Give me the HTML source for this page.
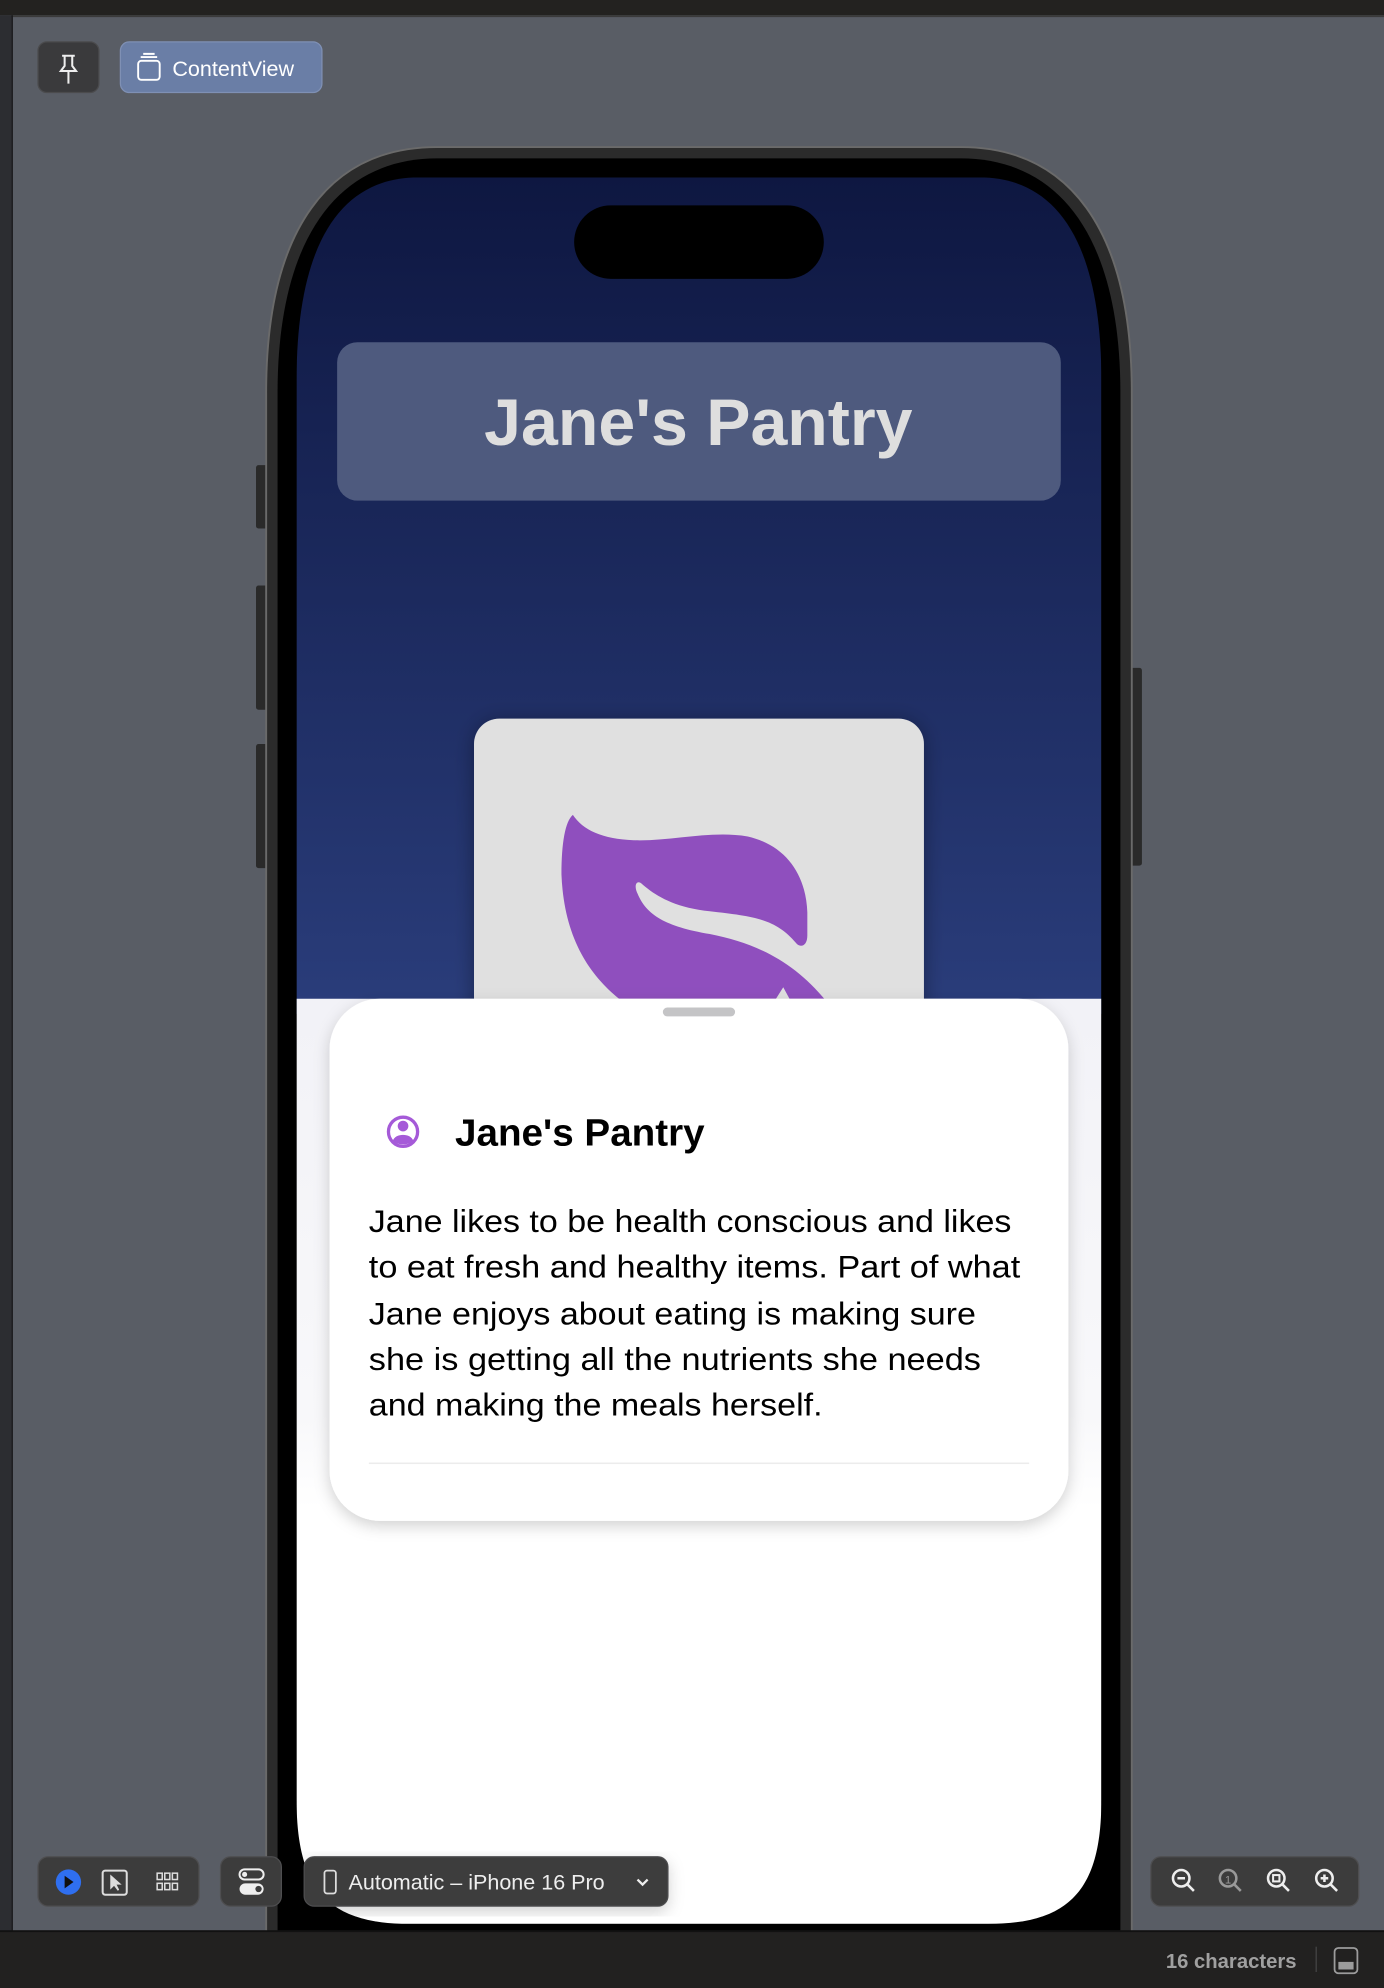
<!DOCTYPE html>
<html><head><meta charset="utf-8"><style>
html,body{margin:0;padding:0;background:#595d65;width:1384px;height:1988px;overflow:hidden}
svg{display:block}
text{font-family:"Liberation Sans",sans-serif}
</style></head><body>
<svg width="1384" height="1988" viewBox="0 0 1092 1568.6" preserveAspectRatio="none" xmlns="http://www.w3.org/2000/svg">
<defs>
<linearGradient id="bg" x1="0" y1="0" x2="0" y2="1">
<stop offset="0" stop-color="#0e1741"/><stop offset="1" stop-color="#2a3d7b"/></linearGradient>
<linearGradient id="sheet" x1="0" y1="0" x2="0" y2="1">
<stop offset="0" stop-color="#f2f2f7"/><stop offset="0.45" stop-color="#f8f8fa"/><stop offset="0.55" stop-color="#ffffff"/></linearGradient>
<filter id="sh" x="-10%" y="-10%" width="120%" height="130%"><feDropShadow dx="0" dy="4" stdDeviation="6" flood-color="#000" flood-opacity="0.18"/></filter>
<filter id="sh2" x="-10%" y="-10%" width="120%" height="130%"><feDropShadow dx="0" dy="2" stdDeviation="8" flood-color="#000" flood-opacity="0.35"/></filter>
<clipPath id="scr"><path d="M234,300 C234,190 270,140 330,140 L773,140 C833,140 869,190 869,300 L869,1420 C869,1490 845,1518 780,1518 L323,1518 C258,1518 234,1490 234,1420 Z"/></clipPath>
</defs>
<rect x="0" y="0" width="1092" height="12" fill="#232220"/>
<rect x="0" y="12" width="1092" height="1.5" fill="#3a3a3a"/>
<rect x="0" y="12" width="9" height="1512" fill="#2c2d31"/>
<rect x="9" y="12" width="1.2" height="1512" fill="#1a1a1c"/>
<rect x="30" y="33" width="48" height="40" rx="7" fill="#3a3a3c" stroke="#4b4b4d"/>
<g stroke="#eee" stroke-width="1.6" fill="none"><path d="M49,44 h10 M51,44 v8 l-3,4 h12 l-3,-4 v-8 M54,56 v10"/></g>
<rect x="95" y="33" width="159" height="40" rx="7" fill="#6a7ea6" stroke="#7f90b4"/>
<g stroke="#fff" stroke-width="1.5" fill="none"><rect x="109" y="48" width="17" height="15" rx="2.5"/><path d="M111,45 h13 M113,42.5 h9"/></g>
<text x="136" y="60" font-size="17" fill="#fff">ContentView</text>
<rect x="202" y="367" width="10" height="50" rx="2" fill="#2a2a2a"/>
<rect x="202" y="462" width="10" height="98" rx="2" fill="#2a2a2a"/>
<rect x="202" y="587" width="10" height="98" rx="2" fill="#2a2a2a"/>
<rect x="891" y="527" width="10" height="156" rx="2" fill="#2a2a2a"/>
<path d="M210,310 C210,180 260,116 345,116 L758,116 C843,116 893,180 893,310 L893,1600 L210,1600 Z" fill="#2b2b2b" stroke="#6a6a6a" stroke-width="1.5"/>
<path d="M219,310 C219,190 265,125 345,125 L758,125 C838,125 884,190 884,310 L884,1600 L219,1600 Z" fill="#000"/>
<g clip-path="url(#scr)">
<rect x="234" y="140" width="635" height="660" fill="url(#bg)"/>
<rect x="266" y="270" width="571" height="125" rx="16" fill="#4e5a7e"/>
<text x="551" y="351" font-size="52" font-weight="bold" fill="#dedede" text-anchor="middle" textLength="338" lengthAdjust="spacingAndGlyphs">Jane's Pantry</text>
<rect x="374" y="567" width="355" height="260" rx="20" fill="#e0e0e0" filter="url(#sh2)"/>
<path d="M452,643 C460,655 475,662 500,663 C530,664 560,655 590,660 C620,667 636,690 637,720 L637,738 C637,747 631,748 628,744 C612,725 595,723 560,719 C530,716 515,705 506,697 C502,694 500,699 503,705 C510,722 525,731 560,737 C595,744 625,757 652,790 L491,790 C465,770 445,740 443,690 C443,665 446,648 452,643 Z" fill="#8f4fbe"/>
<path d="M611,790 L618,779 L624,790 Z" fill="#e0e0e0"/>
<path d="M234,788 L869,788 L869,1520 L234,1520 Z" fill="url(#sheet)"/>
<rect x="260" y="788" width="583" height="412" rx="40" fill="#fff" filter="url(#sh)"/>
<rect x="523" y="795" width="57" height="7" rx="3.5" fill="#c4c4c6"/>
<circle cx="318" cy="893" r="11.5" fill="none" stroke="#a55ad8" stroke-width="2.6"/>
<circle cx="318" cy="888.5" r="4.2" fill="#a55ad8"/>
<path d="M310,900 C312,894 324,894 326,900 C322,904 314,904 310,900 Z" fill="#a55ad8"/>
<text x="359" y="904" font-size="30" font-weight="bold" fill="#000" textLength="197" lengthAdjust="spacingAndGlyphs">Jane's Pantry</text>
<g font-size="25" fill="#000">
<text x="291" y="972" textLength="507" lengthAdjust="spacingAndGlyphs">Jane likes to be health conscious and likes</text>
<text x="291" y="1008" textLength="514" lengthAdjust="spacingAndGlyphs">to eat fresh and healthy items. Part of what</text>
<text x="291" y="1045" textLength="479" lengthAdjust="spacingAndGlyphs">Jane enjoys about eating is making sure</text>
<text x="291" y="1081" textLength="483" lengthAdjust="spacingAndGlyphs">she is getting all the nutrients she needs</text>
<text x="291" y="1117" textLength="358" lengthAdjust="spacingAndGlyphs">and making the meals herself.</text>
</g>
<rect x="291" y="1154" width="521" height="1.2" fill="#ececec"/>
</g>
<rect x="453" y="162" width="197" height="58" rx="29" fill="#000"/>
<rect x="30" y="1465" width="127" height="39" rx="8" fill="#3c3c3c" stroke="#4e4e50"/>
<circle cx="54" cy="1485" r="10" fill="#2f6ff0"/><path d="M51,1480 L58,1485 L51,1490 Z" fill="#111"/>
<rect x="81" y="1476" width="19" height="19" rx="2" fill="none" stroke="#ddd" stroke-width="1.6"/><path d="M87,1479 L87,1491 L90,1488 L93,1492 L94,1491 L92,1487 L96,1487 Z" fill="#ddd"/>
<g fill="none" stroke="#ddd" stroke-width="1.2"><rect x="124" y="1478" width="4" height="5"/><rect x="130" y="1478" width="4" height="5"/><rect x="136" y="1478" width="4" height="5"/><rect x="124" y="1486" width="4" height="5"/><rect x="130" y="1486" width="4" height="5"/><rect x="136" y="1486" width="4" height="5"/></g>
<rect x="174" y="1465" width="48" height="39" rx="8" fill="#3c3c3c" stroke="#4e4e50"/>
<rect x="189" y="1475" width="19" height="8" rx="4" fill="none" stroke="#eee" stroke-width="1.6"/><rect x="189" y="1486" width="19" height="9" rx="4.5" fill="#eee"/>
<circle cx="193" cy="1479" r="2" fill="#eee"/><circle cx="204" cy="1490.5" r="2.5" fill="#3c3c3c"/>
<rect x="240" y="1465" width="287" height="39" rx="8" fill="#3c3c3c" stroke="#4e4e50" filter="url(#sh)"/>
<rect x="256" y="1476" width="9" height="18" rx="2" fill="none" stroke="#ddd" stroke-width="1.4"/>
<text x="275" y="1491" font-size="17" fill="#eee">Automatic – iPhone 16 Pro</text>
<path d="M503,1483 l4,4 l4,-4" fill="none" stroke="#eee" stroke-width="1.8"/>
<rect x="908" y="1465" width="164" height="39" rx="8" fill="#3c3c3c" stroke="#4e4e50"/>
<g fill="none" stroke-width="2"><g stroke="#eee"><circle cx="932" cy="1482" r="6.5"/><path d="M937,1487 l5,5 M929,1482 h6"/></g>
<g stroke="#999"><circle cx="969" cy="1482" r="6.5"/><path d="M974,1487 l5,5"/></g>
<g stroke="#eee"><circle cx="1007" cy="1482" r="6.5"/><path d="M1012,1487 l5,5"/><rect x="1004.5" y="1479.5" width="5" height="5" stroke-width="1.6"/></g>
<g stroke="#eee"><circle cx="1045" cy="1482" r="6.5"/><path d="M1050,1487 l5,5 M1042,1482 h6 M1045,1479 v6"/></g></g>
<text x="969" y="1486" font-size="9" fill="#999" text-anchor="middle">1</text>
<rect x="0" y="1524" width="1092" height="45" fill="#222120"/>
<rect x="0" y="1523" width="1092" height="1.5" fill="#111"/>
<text x="1023" y="1553" font-size="16" font-weight="bold" fill="#a0a0a0" text-anchor="end">16 characters</text>
<rect x="1038" y="1536" width="1" height="20" fill="#444"/>
<rect x="1053" y="1537" width="18" height="20" rx="3" fill="none" stroke="#9c9c9c" stroke-width="1.4"/><rect x="1056" y="1548" width="12" height="6" fill="#9c9c9c"/>
</svg>
</body></html>
